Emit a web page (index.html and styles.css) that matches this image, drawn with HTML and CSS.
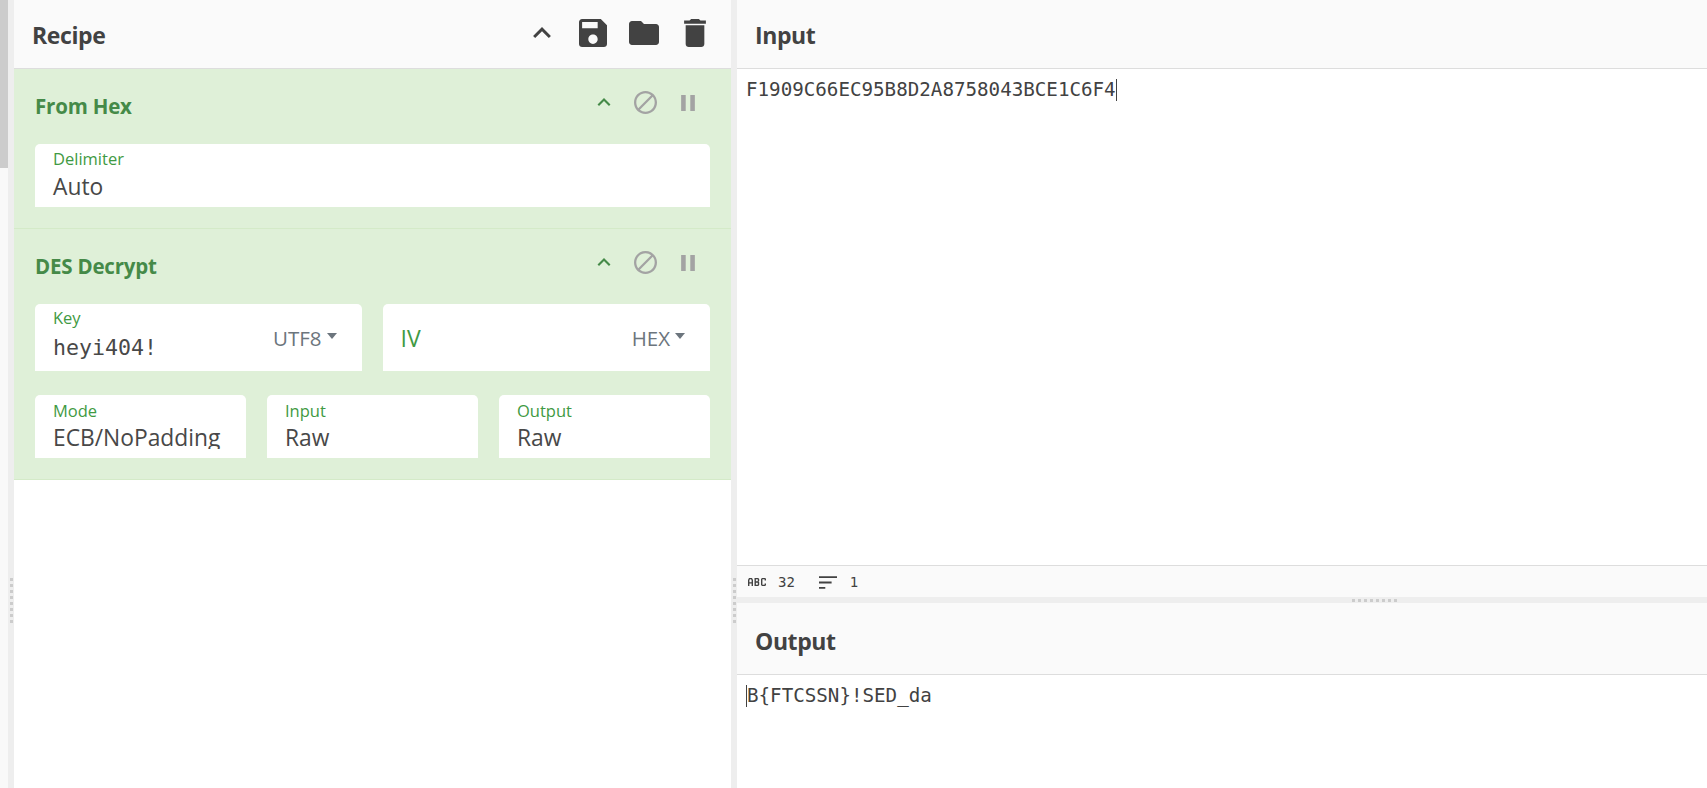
FILE: index.html
```html
<!DOCTYPE html>
<html lang="en">
<head>
<meta charset="utf-8">
<title>CyberChef</title>
<link rel="stylesheet" href="styles.css">
</head>
<body>
<div class="app">
  <div class="scroll-track"><div class="scroll-thumb"></div></div>
  <div class="gutter-v"><div class="dots-v"><i></i><i></i><i></i><i></i><i></i><i></i><i></i><i></i></div></div>
  <section class="recipe">
    <header class="head recipe-head">
      <h1>Recipe</h1>
      <div class="head-icons">
        <svg class="ic-chev" viewBox="6 8 12 7.41"><path d="M7.41 15.41L12 10.83l4.59 4.58L18 14l-6-6-6 6z"/></svg>
        <svg class="ic-save" viewBox="3 3 18 18"><path d="M17 3H5c-1.11 0-2 .9-2 2v14c0 1.1.89 2 2 2h14c1.1 0 2-.9 2-2V7l-4-4zm-5 16c-1.66 0-3-1.34-3-3s1.34-3 3-3 3 1.34 3 3-1.34 3-3 3zm3-10H5V5h10v4z"/></svg>
        <svg class="ic-folder" viewBox="2 4 20 16"><path d="M10 4H4c-1.1 0-1.99.9-1.99 2L2 18c0 1.1.9 2 2 2h16c1.1 0 2-.9 2-2V8c0-1.1-.9-2-2-2h-8l-2-2z"/></svg>
        <svg class="ic-trash" viewBox="5 3 14 18"><path d="M6 19c0 1.1.9 2 2 2h8c1.1 0 2-.9 2-2V7H6v12zM19 4h-3.5l-1-1h-5l-1 1H5v2h14V4z"/></svg>
      </div>
    </header>
    <div class="op op-hex">
      <div class="op-head">
        <h2>From Hex</h2>
        <div class="op-icons">
          <svg class="ic-small" viewBox="6 8 12 7.41"><path d="M7.41 15.41L12 10.83l4.59 4.58L18 14l-6-6-6 6z"/></svg>
          <svg class="ic-ban" viewBox="2 2 20 20"><path d="M12 2C6.48 2 2 6.48 2 12s4.48 10 10 10 10-4.48 10-10S17.52 2 12 2zM4 12c0-4.42 3.58-8 8-8 1.85 0 3.55.63 4.9 1.69L5.69 16.9C4.63 15.55 4 13.85 4 12zm8 8c-1.85 0-3.55-.63-4.9-1.69L18.31 7.1C19.37 8.45 20 10.15 20 12c0 4.42-3.58 8-8 8z"/></svg>
          <svg class="ic-pause" viewBox="6 5 12 14"><path d="M6 19h4V5H6v14zm8-14v14h4V5h-4z"/></svg>
        </div>
      </div>
      <div class="field field-full">
        <label>Delimiter</label>
        <div class="value">Auto</div>
      </div>
    </div>
    <div class="op op-des">
      <div class="op-head">
        <h2>DES Decrypt</h2>
        <div class="op-icons">
          <svg class="ic-small" viewBox="6 8 12 7.41"><path d="M7.41 15.41L12 10.83l4.59 4.58L18 14l-6-6-6 6z"/></svg>
          <svg class="ic-ban" viewBox="2 2 20 20"><path d="M12 2C6.48 2 2 6.48 2 12s4.48 10 10 10 10-4.48 10-10S17.52 2 12 2zM4 12c0-4.42 3.58-8 8-8 1.85 0 3.55.63 4.9 1.69L5.69 16.9C4.63 15.55 4 13.85 4 12zm8 8c-1.85 0-3.55-.63-4.9-1.69L18.31 7.1C19.37 8.45 20 10.15 20 12c0 4.42-3.58 8-8 8z"/></svg>
          <svg class="ic-pause" viewBox="6 5 12 14"><path d="M6 19h4V5H6v14zm8-14v14h4V5h-4z"/></svg>
        </div>
      </div>
      <div class="row-two">
        <div class="field field-key">
          <div class="key-text">
            <label>Key</label>
            <div class="value mono">heyi404!</div>
          </div>
          <div class="toggle">UTF8<span class="caret"></span></div>
        </div>
        <div class="field field-iv">
          <div class="iv-label">IV</div>
          <div class="toggle">HEX<span class="caret"></span></div>
        </div>
      </div>
      <div class="row-three">
        <div class="field field-sm"><label>Mode</label><div class="value">ECB/NoPadding</div></div>
        <div class="field field-sm"><label>Input</label><div class="value">Raw</div></div>
        <div class="field field-sm"><label>Output</label><div class="value">Raw</div></div>
      </div>
    </div>
  </section>
  <div class="gutter-v gutter-mid"><div class="dots-v"><i></i><i></i><i></i><i></i><i></i><i></i><i></i><i></i></div></div>
  <section class="io">
    <div class="input-pane">
      <header class="head io-head"><h1>Input</h1></header>
      <div class="editor input-editor"><span class="text">F1909C66EC95B8D2A8758043BCE1C6F4</span><span class="cursor"></span></div>
      <div class="status">
        <svg class="ic-abc" viewBox="0 0 18 8"><path d="M0 8V2l1-2h3l1 2v6H3.600V5.500H1.400V8zM1.400 4.200h2.200V2L3 1.300H2L1.400 2zM6.500 0h3.700L11.200 1v2l-.7.6.7.6v2.800l-1 1H6.500zM7.900 1.300v2h1.700l.2-.3V1.600l-.2-.3zM7.900 4.700v2h1.700l.2-.3V5l-.2-.3zM13 1l1-1h3.300L18 1v1.500h-1.400V1.300h-2.200v5.400h2.200V5.500H18V7l-.8 1H14l-1-1z"/></svg>
        <span class="count">32</span>
        <svg class="ic-lines" viewBox="0 0 20 14"><path d="M0 0h20v2H0zM0 6h14v2H0zM0 12h7v2H0z"/></svg>
        <span class="count">1</span>
      </div>
    </div>
    <div class="gutter-h"><div class="dots-h"><i></i><i></i><i></i><i></i><i></i><i></i><i></i><i></i></div></div>
    <div class="output-pane">
      <header class="head io-head output-head"><h1>Output</h1></header>
      <div class="editor output-editor"><span class="cursor"></span><span class="text">B{FTCSSN}!SED_da</span></div>
    </div>
  </section>
</div>
</body>
</html>
```
FILE: styles.css
```css
* { box-sizing: border-box; }
html, body { margin: 0; height: 100%; overflow: hidden; background: #fff; }
.app { display: flex; width: 1707px; height: 788px; color: #424242; font-family: "Open Sans", sans-serif; }
h1, h2 { margin: 0; }

.scroll-track { width: 8px; background: #f9f9f9; flex: none; }
.scroll-thumb { height: 168px; background: #ccc; }
.gutter-v { width: 6px; flex: none; background: #eee; display: flex; flex-direction: column; justify-content: flex-end; padding-bottom: 165px; align-items: center; }
.dots-v { display: flex; flex-direction: column; gap: 3px; }
.dots-v i { display: block; width: 3px; height: 3px; background: #ccc; }

.recipe { width: 717px; flex: none; display: flex; flex-direction: column; background: #fff; }
.gutter-mid { width: 6px; }
.io { flex: 1; min-width: 0; display: flex; flex-direction: column; }

.head { display: flex; align-items: center; background: #fafafa; border-bottom: 1px solid #ddd; height: 69px; padding: 2px 0 0 18px; }
.head h1 { font-size: 23px; line-height: 30px; font-weight: 700; letter-spacing: -0.4px; }
.recipe-head { padding-left: 18px; padding-top: 2px; justify-content: space-between; padding-right: 25px; }
.head-icons { display: flex; align-items: center; fill: #424242; margin-top: -2px; }
.head-icons svg { display: block; }
.ic-chev { width: 18px; height: 11px; margin-top: -3px; margin-right: 28px; }
.ic-save { width: 28px; height: 28px; margin-top: -3px; margin-right: 22px; }
.ic-folder { width: 30px; height: 24px; margin-top: -2px; margin-right: 25px; }
.ic-trash { width: 22px; height: 28px; margin-top: -3px; }

.op { background: #dff0d8; border-bottom: 1px solid #d4eac8; padding: 0 21px; }
.op-hex { height: 160px; }
.op-des { height: 251px; }
.op-head { display: flex; justify-content: space-between; align-items: flex-start; height: 75px; padding-top: 21px; }
.op-head h2 { font-size: 20.500px; line-height: 32px; font-weight: 700; color: #458a48; letter-spacing: -0.2px; }
.op-icons { display: flex; align-items: flex-start; padding-right: 15px; padding-top: 1px; }
.op-icons svg { display: block; }
.ic-small { width: 14px; height: 8px; fill: #458a48; margin-top: 7px; margin-right: 23px; }
.ic-ban { width: 23px; height: 23px; fill: #a3a3a3; margin-right: 24px; }
.ic-pause { width: 14px; height: 16px; fill: #a3a3a3; margin-top: 4px; }

.field { background: #fff; border-radius: 5px 5px 0 0; font-family: "Open Sans", sans-serif; overflow: hidden; }
.field label { display: block; font-size: 16.500px; line-height: 20px; color: #3f9a43; font-weight: 400; }
.value { font-size: 22.800px; line-height: 30px; color: #484848; font-weight: 400; white-space: nowrap; }
.mono { font-family: "DejaVu Sans Mono", monospace; font-size: 21.600px; line-height: 28px; font-weight: 400; }
.field-full { height: 63px; width: 675px; padding: 5px 18px 0; }
.field-full .value { margin-top: 3px; }

.row-two { display: flex; gap: 21px; }
.field-key, .field-iv { height: 67px; display: flex; justify-content: space-between; align-items: center; padding: 0 25px 0 18px; }
.field-key { width: 327px; }
.field-iv { width: 328px; }
.key-text { margin-top: -3px; }
.key-text .value { margin-top: 6px; }
.key-text label { margin-top: -2px; }
.iv-label { font-size: 23px; font-weight: 400; color: #3f9a43; }
.toggle { font-size: 20.500px; color: #6c757d; display: flex; align-items: center; gap: 5px; font-weight: 400; }
.caret { width: 0; height: 0; border-left: 5.500px solid transparent; border-right: 5.500px solid transparent; border-top: 6px solid #6c757d; margin-top: -3px; }

.row-three { display: flex; gap: 21px; margin-top: 24px; }
.field-sm { width: 211px; height: 63px; padding: 6px 18px 0; }
.field-sm .value { height: 22px; line-height: 22px; overflow: hidden; margin-top: 6px; }

.input-pane { height: 597px; display: flex; flex-direction: column; }
.editor { font-family: "DejaVu Sans Mono", monospace; font-size: 19.200px; line-height: 24px; color: #424242; padding: 9px 0 0 9px; display: flex; align-items: flex-start; white-space: pre; background: #fff; }
.input-editor { flex: 1; }
.cursor { width: 1px; height: 22px; background: #424242; flex: none; margin-top: 1px; }
.status { height: 32px; background: #fafafa; border-top: 1px solid #ddd; display: flex; align-items: center; padding-left: 11px; font-family: "DejaVu Sans Mono", monospace; font-size: 14px; color: #424242; }
.ic-abc { width: 18px; height: 8px; fill: #424242; margin-right: 12px; }
.ic-lines { width: 18px; height: 13px; fill: #424242; margin: 2px 13px 0 24px; }
.gutter-h { height: 6px; background: #eee; display: flex; justify-content: center; align-items: center; padding-left: 304px; }
.dots-h { display: flex; gap: 3px; }
.dots-h i { display: block; width: 3px; height: 3px; background: #ccc; }
.output-pane { flex: 1; display: flex; flex-direction: column; }
.output-head { height: 72px; padding-top: 4px; }
.output-editor { flex: 1; }
```
